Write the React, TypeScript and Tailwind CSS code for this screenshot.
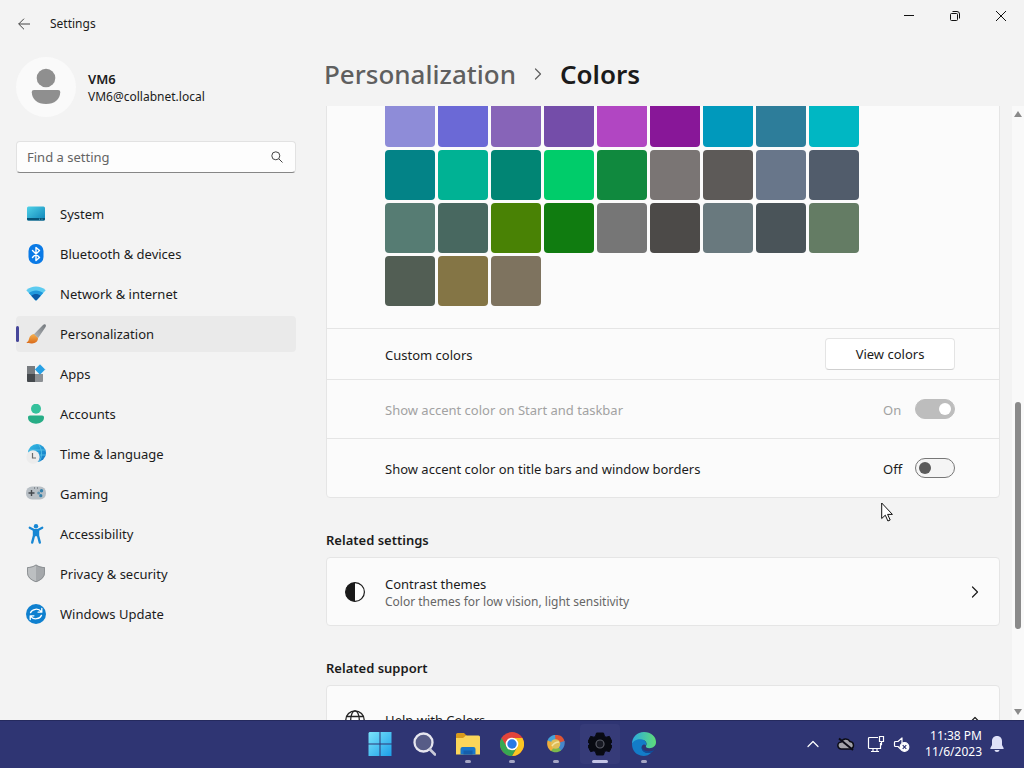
import { FC, ReactNode } from 'react';
import clsx from 'clsx';

interface NavItem {
  label: string;
  icon: ReactNode;
  active?: boolean;
}

interface TaskItem {
  label: string;
  icon: ReactNode;
  state?: 'running' | 'active';
}

const swatches = [
  '#8e8cd8', '#6b69d6', '#8764b8', '#744da9', '#b146c2', '#881798', '#0099bc', '#2d7d9a', '#00b7c3',
  '#038387', '#00b294', '#018574', '#00cc6a', '#10893e', '#7a7574', '#5d5a58', '#68768a', '#515c6b',
  '#567c73', '#486860', '#498205', '#107c10', '#767676', '#4c4a48', '#69797e', '#4a5459', '#647c64',
  '#525e54', '#847545', '#7e735f',
];

const navItems: NavItem[] = [
  {
    label: 'System',
    icon: (
      <svg viewBox="0 0 20 20" className="size-5">
        <defs>
          <linearGradient id="sys" x1="0" y1="0" x2="1" y2="1">
            <stop offset="0" stopColor="#4fd2e8" />
            <stop offset="1" stopColor="#0e83b8" />
          </linearGradient>
        </defs>
        <rect x="1" y="2.500" width="18" height="14" rx="1.500" fill="url(#sys)" />
        <path d="M1 14h18v1a1.500 1.500 0 0 1-1.500 1.500h-15A1.500 1.500 0 0 1 1 15z" fill="#075478" />
        <path d="M13 15.200h1m1.500 0h1" stroke="#7fd8ee" strokeWidth=".7" />
      </svg>
    ),
  },
  {
    label: 'Bluetooth & devices',
    icon: (
      <svg viewBox="0 0 20 20" className="size-5">
        <rect x="2.500" y="0" width="15" height="20" rx="7" fill="#0a7ae6" />
        <path d="M6.500 6.500l7 7L10 16.500v-13l3.500 3-7 7" fill="none" stroke="#fff" strokeWidth="1.400" strokeLinejoin="round" strokeLinecap="round" />
      </svg>
    ),
  },
  {
    label: 'Network & internet',
    icon: (
      <svg viewBox="0 0 20 20" className="size-5">
        <path d="M.3 6.200C5.500 1.300 14.500 1.300 19.700 6.200L10.800 16q-.8.800-1.600 0z" fill="#5ccbf0" />
        <path d="M2.800 9c4-3.500 10.400-3.500 14.400 0l-6.400 7q-.8.800-1.600 0z" fill="#1f98dd" />
        <path d="M5.300 11.700c2.700-2.300 6.700-2.300 9.400 0L10.800 16q-.8.800-1.600 0z" fill="#0b5ba8" />
      </svg>
    ),
  },
  {
    label: 'Personalization',
    active: true,
    icon: (
      <svg viewBox="0 0 20 20" className="size-5">
        <defs>
          <linearGradient id="brush" x1="0" y1="1" x2="1" y2="0">
            <stop offset="0" stopColor="#b4b8bb" />
            <stop offset="1" stopColor="#73787d" />
          </linearGradient>
          <linearGradient id="tip" x1="0" y1="0" x2="0" y2="1">
            <stop offset="0" stopColor="#f6b04e" />
            <stop offset="1" stopColor="#d96b1b" />
          </linearGradient>
        </defs>
        <path d="M19.400.5c.8.800.6 1.700 0 2.700l-7.400 11-4.300-3.700L17 1.100c.8-.9 1.700-1.200 2.400-.6z" fill="url(#brush)" />
        <path d="M7.800 10.100l4.200 3.800c.1 3.400-2.600 5.300-5.900 5.500-2 .1-4.300-.2-5.800-.9 2.100-.7 2.300-2.200 2.800-4 .6-2.300 2.500-4.100 4.700-4.400z" fill="url(#tip)" />
      </svg>
    ),
  },
  {
    label: 'Apps',
    icon: (
      <svg viewBox="0 0 20 20" className="size-5">
        <path d="M1 2h8v8H1z" fill="#777b7f" />
        <path d="M1 10h8v8H2a1 1 0 0 1-1-1z" fill="#45494d" />
        <path d="M9 10h8v7a1 1 0 0 1-1 1H9z" fill="#8c9094" />
        <path d="M14 .8l4.700 4.700-4.700 4.700-4.700-4.700z" fill="#27a0e4" stroke="#27a0e4" strokeLinejoin="round" />
      </svg>
    ),
  },
  {
    label: 'Accounts',
    icon: (
      <svg viewBox="0 0 20 20" className="size-5">
        <circle cx="10" cy="4.700" r="5" fill="#35c19c" />
        <path d="M4 11.500h12c1.300 0 2 .8 2 2 0 4-4 6.200-8 6.200s-8-2.200-8-6.200c0-1.200.7-2 2-2z" fill="#27ad86" />
      </svg>
    ),
  },
  {
    label: 'Time & language',
    icon: (
      <svg viewBox="0 0 20 20" className="size-5">
        <defs>
          <linearGradient id="globe" x1="0" y1="0" x2="1" y2="1">
            <stop offset="0" stopColor="#36bfe6" />
            <stop offset="1" stopColor="#1173c4" />
          </linearGradient>
        </defs>
        <circle cx="11" cy="9" r="9" fill="url(#globe)" />
        <path d="M3 6h16.400M12 0c4 4 5 12 1 18M19.500 11h-6" fill="none" stroke="#5cc6ea" strokeWidth=".8" />
        <circle cx="7" cy="13" r="6.700" fill="#ececec" />
        <path d="M6.500 9v5H10" fill="none" stroke="#6a6a6a" strokeWidth="1.200" />
      </svg>
    ),
  },
  {
    label: 'Gaming',
    icon: (
      <svg viewBox="0 0 20 20" className="size-5">
        <rect x="0" y="2.500" width="20" height="13" rx="6" fill="#b8bfc5" />
        <path d="M5.500 6v6M2.500 9h6" stroke="#43484d" strokeWidth="1.400" />
        <path d="M8 4h1m2 0h1" stroke="#555a60" strokeWidth="1" />
        <circle cx="15.500" cy="6.700" r="1.700" fill="#357fa8" />
        <circle cx="12.700" cy="9" r="1.500" fill="#5d93b0" />
        <circle cx="14.800" cy="11.700" r="1.600" fill="#357fa8" />
      </svg>
    ),
  },
  {
    label: 'Accessibility',
    icon: (
      <svg viewBox="0 0 20 20" className="size-5" fill="none" stroke="#1787d4" strokeLinecap="round" strokeLinejoin="round">
        <circle cx="10" cy="2.300" r="2.200" fill="#1787d4" stroke="none" />
        <path d="M3.700 3.700L8 6h4l4.300-2.300" strokeWidth="2.200" />
        <path d="M8 6.500h4v5l1.800 7M8 6.500v5l-1.800 7" strokeWidth="2.400" />
        <path d="M8.500 7h3v4.500h-3z" fill="#1787d4" strokeWidth="1.500" />
      </svg>
    ),
  },
  {
    label: 'Privacy & security',
    icon: (
      <svg viewBox="0 0 20 20" className="size-5">
        <path d="M10 .5c2.600 1.800 5.500 2.500 9 2.700v5c0 5-3.500 8-9 10z" fill="#a5a8ab" />
        <path d="M10 .5C7.400 2.300 4.500 3 1 3.200v5c0 5 3.500 8 9 10z" fill="#bcbfc1" />
        <path d="M10 1c2.600 1.800 5.200 2.400 8.500 2.600v4.600c0 4.800-3.300 7.600-8.500 9.500-5.200-1.900-8.500-4.700-8.500-9.500V3.600C4.800 3.400 7.400 2.800 10 1z" fill="none" stroke="#8d9194" />
      </svg>
    ),
  },
  {
    label: 'Windows Update',
    icon: (
      <svg viewBox="0 0 20 20" className="size-5">
        <circle cx="10" cy="10" r="10" fill="#0f80cf" />
        <path d="M4.500 8.700C6 4.800 12.500 3.800 15.200 7.700M15.800 4.500v3.700h-3.700M15.500 11.300C14 15.200 7.500 16.200 4.800 12.300M4.200 15.500v-3.700h3.700" fill="none" stroke="#fff" strokeWidth="1.300" strokeLinecap="round" strokeLinejoin="round" />
      </svg>
    ),
  },
];

const taskItems: TaskItem[] = [
  {
    label: 'Start',
    icon: (
      <svg viewBox="0 0 24 24" className="size-6">
        <defs>
          <linearGradient id="win" x1="0" y1="0" x2="1" y2="1">
            <stop offset="0" stopColor="#7be4fb" />
            <stop offset="1" stopColor="#1c9fe8" />
          </linearGradient>
        </defs>
        <path d="M1.500 0H11.500V11.500H.5V1zM12.500 0H23.500V11.500H12.500zM.5 12.500H11.500V24H.5zM12.500 12.500H23.500V24H12.500z" fill="url(#win)" />
      </svg>
    ),
  },
  {
    label: 'Search',
    icon: (
      <svg viewBox="0 0 24 24" className="size-6">
        <circle cx="11.500" cy="10.500" r="9" fill="#575c87" stroke="#e6e6ef" strokeWidth="2.300" />
        <path d="M18 17.500l5 5" stroke="#c9cad8" strokeWidth="2.600" strokeLinecap="round" />
      </svg>
    ),
  },
  {
    label: 'File Explorer',
    state: 'running',
    icon: (
      <svg viewBox="0 0 26 24" className="h-6 w-[26px]">
        <path d="M1 2.500A1.500 1.500 0 0 1 2.500 1H9l3 3-4 4H1z" fill="#d99a1c" />
        <path d="M1 6h7l3-2.500h12.500A1.500 1.500 0 0 1 25 5v17.500H1z" fill="#fbd65a" />
        <path d="M5.500 22.500V17a2 2 0 0 1 2-2h11a2 2 0 0 1 2 2v5.500z" fill="#1976c9" />
        <path d="M8.500 18.500h9V22.500h-9z" fill="#165fab" />
      </svg>
    ),
  },
  {
    label: 'Chrome',
    state: 'running',
    icon: (
      <svg viewBox="0 0 24 24" className="size-6">
        <circle cx="12" cy="12" r="12" fill="#e2443a" />
        <path d="M12 6h10.400A12 12 0 0 1 12 24l5.200-9z" fill="#fbc723" />
        <path d="M1.600 6L6.800 15A6 6 0 0 0 17.200 15L12 24A12 12 0 0 1 1.600 6z" fill="#36a852" />
        <circle cx="12" cy="12" r="6.300" fill="#fff" />
        <circle cx="12" cy="12" r="4.700" fill="#2a7ae4" />
      </svg>
    ),
  },
  {
    label: 'Color tool',
    state: 'running',
    icon: (
      <svg viewBox="0 0 20 20" className="size-5">
        <path d="M1.500 7C3 2 8 .2 12 1.400L10 10z" fill="#45a3d8" />
        <path d="M9 1.200c5-1 9 2 9.500 6.800L10 11z" fill="#df5535" />
        <path d="M18.500 7c.8 4-1 8-4.500 10l-5-7z" fill="#4687cb" />
        <path d="M15 16.500c-3 2.500-8 2.300-10.500 0L9 8z" fill="#7cba4b" />
        <path d="M5 17C1.500 14.500.5 10.500 1.500 6.500L11 10z" fill="#efae3c" />
        <circle cx="9.500" cy="10" r="4.800" fill="#dfbd58" />
        <path d="M6 12c2-3 4-4 7-4" stroke="#f4e3a0" strokeWidth="1.500" fill="none" />
      </svg>
    ),
  },
  {
    label: 'Settings',
    state: 'active',
    icon: (
      <svg viewBox="0 0 24 24" className="size-6">
        <path d="M8.500 1h7l1 3.300 1.500.9 3.400-.8 2.600 5.400-1.800 2.200 1.800 2.200-2.600 5.400-3.400-.8-1.500.9-1 3.300h-7l-1-3.300-1.500-.9-3.400.8L0 14.200 1.800 12 0 9.800l2.600-5.400 3.400.8 1.500-.9z" fill="#080a12" stroke="#080a12" strokeLinejoin="round" />
        <circle cx="12" cy="12" r="4" fill="#171923" stroke="#5a5c66" strokeWidth="1.200" />
      </svg>
    ),
  },
  {
    label: 'Edge',
    state: 'running',
    icon: (
      <svg viewBox="0 0 24 24" className="size-6">
        <defs>
          <linearGradient id="edge" x1="0" y1="0" x2="1" y2="0">
            <stop offset="0" stopColor="#2aa9e0" />
            <stop offset="1" stopColor="#5fdc78" />
          </linearGradient>
        </defs>
        <path d="M0 12C0 5 5 0 12 0s12 4.500 12 10c0 4-3 6.200-6.500 6.200-3 0-4-1-3.500-2.200 1.500-2.500 0-6-4-6C5 8 1 11 0 12z" fill="url(#edge)" />
        <path d="M0 12C1 9 5 7 9 7.300c4 .2 6 3.200 5 6.200-1-1.500-3-1.500-4 .5-1.500 3.500 2 8.500 9.500 6.500-4 4.500-10 4-13.500 2C2 20.500 0 16.500 0 12z" fill="#137cc8" />
        <path d="M10 14c-1.500 3.500 2 8.500 9.500 6.500 1-.5 2-1.300 2.800-2.500C16 21 9.500 19 10 14z" fill="#0c4f9e" />
      </svg>
    ),
  },
];

const Chevron: FC<{ className?: string }> = ({ className }) => (
  <svg viewBox="0 0 12 12" className={clsx('size-3', className)}>
    <path d="M3.500 1l5 5-5 5" fill="none" stroke="currentColor" strokeWidth="1.200" strokeLinecap="round" strokeLinejoin="round" />
  </svg>
);

const Toggle: FC<{ id: string; label: string; checked?: boolean; disabled?: boolean }> = ({ id, label, checked, disabled }) => (
  <div className={clsx('flex h-[59px] items-center border-t border-[#e5e5e5] pr-11 pl-[58px]', disabled && 'text-[#a2a2a2]')}>
    <label htmlFor={id} className="flex-1 pt-[2px]">{label}</label>
    <span className="w-8 pt-[2px]" aria-hidden="true">{checked ? 'On' : 'Off'}</span>
    <input
      id={id}
      type="checkbox"
      role="switch"
      defaultChecked={checked}
      disabled={disabled}
      className="flex h-5 w-10 appearance-none items-center rounded-full border border-[#777] bg-[#f5f5f5] px-[3px] before:size-3 before:rounded-full before:bg-[#5c5c5c] checked:justify-end checked:border-[#bdbdbd] checked:bg-[#bdbdbd] checked:before:bg-white"
    />
  </div>
);

const TitleBar: FC = () => (
  <header className="flex h-12 shrink-0 items-start justify-between">
    <div className="flex h-12 items-center gap-5 pl-[18px]">
      <button aria-label="Back">
        <svg viewBox="0 0 12 12" className="size-3">
          <path d="M12 6H.7M6 .7L.7 6 6 11.300" fill="none" stroke="#444" strokeWidth="1" />
        </svg>
      </button>
      <span className="text-xs">Settings</span>
    </div>
    <div className="flex h-8">
      <button aria-label="Minimize" className="flex w-[46px] items-center justify-center">
        <svg viewBox="0 0 12 12" className="size-3">
          <path d="M1 5.500h10" stroke="#111" />
        </svg>
      </button>
      <button aria-label="Restore" className="flex w-[46px] items-center justify-center">
        <svg viewBox="0 0 12 12" className="size-3" fill="none" stroke="#111">
          <rect x="1.500" y="3.500" width="7" height="7" rx="1" />
          <path d="M3.500 1.500H8A2.500 2.500 0 0 1 10.500 4v4.500" />
        </svg>
      </button>
      <button aria-label="Close" className="flex w-[46px] items-center justify-center">
        <svg viewBox="0 0 12 12" className="size-3">
          <path d="M1 1l10 10M11 1L1 11" stroke="#111" />
        </svg>
      </button>
    </div>
  </header>
);

const Sidebar: FC = () => (
  <aside className="w-[312px] shrink-0 px-4 pt-[9px]">
    <div className="flex items-center gap-3">
      <svg viewBox="0 0 60 60" className="size-[60px]">
        <circle cx="30" cy="30" r="30" fill="#fafafa" />
        <circle cx="30" cy="21" r="9.300" fill="#8f8f8f" />
        <path d="M18 33h24c1.500 0 2.200.8 2.200 2.300C44.200 42.500 38.500 47 30 47s-14.200-4.500-14.200-11.700c0-1.500.7-2.300 2.200-2.300z" fill="#8f8f8f" />
      </svg>
      <div className="pt-[2px]">
        <p className="leading-[18px] font-semibold">VM6</p>
        <p className="text-xs leading-[18px]">VM6@collabnet.local</p>
      </div>
    </div>

    <div className="mt-6 flex h-8 items-center rounded border border-[#e2e2e2] border-b-[#868686] bg-[#fdfdfd] pr-3 pl-[10px]">
      <input type="search" aria-label="Find a setting" placeholder="Find a setting" className="min-w-0 flex-1 outline-none placeholder:text-[#646464]" />
      <svg viewBox="0 0 12 12" className="size-3" fill="none" stroke="#444">
        <circle cx="4.800" cy="4.800" r="4" />
        <path d="M7.800 7.800l3.700 3.700" />
      </svg>
    </div>

    <nav className="mt-[23px] flex flex-col gap-1">
      {navItems.map((item) => (
        <a
          key={item.label}
          href="#"
          aria-current={item.active ? 'page' : undefined}
          className={clsx('relative flex h-9 items-center gap-[14px] rounded pl-[10px]', item.active && 'bg-[#eaeaea]')}
        >
          {item.active && <span className="absolute left-0 h-4 w-[3px] rounded-full bg-[#46469a]" />}
          {item.icon}
          <span>{item.label}</span>
        </a>
      ))}
    </nav>
  </aside>
);

const ColorsPage: FC = () => (
  <main className="flex min-w-0 flex-1 flex-col pl-[14px]">
    <h1 className="-ml-[2px] flex h-[58px] shrink-0 items-center gap-4 pb-[6px] text-[26px]">
      <a href="#" className="font-medium text-[#5f5f5f]">Personalization</a>
      <Chevron className="text-[#5f5f5f]" />
      <span className="font-semibold">Colors</span>
    </h1>

    <div className="flex min-h-0 flex-1 gap-3">
      <div className="min-w-0 flex-1 overflow-hidden">
        <section className="-mt-[10px] rounded-b border border-[#e5e5e5] bg-[#fbfbfb]">
          <div className="grid grid-cols-[repeat(9,50px)] gap-[3px] pb-[22px] pl-[58px]">
            {swatches.map((color) => (
              <button key={color} aria-label={color} className="h-[50px] rounded" style={{ backgroundColor: color }} />
            ))}
          </div>
          <div className="flex h-[51px] items-center justify-between border-t border-[#e5e5e5] pr-11 pl-[58px]">
            <span className="pt-[2px]">Custom colors</span>
            <button className="h-8 w-[130px] rounded border border-[#e4e4e4] border-b-[#cfcfcf] bg-white">View colors</button>
          </div>
          <Toggle id="taskbar-accent" label="Show accent color on Start and taskbar" checked disabled />
          <Toggle id="title-accent" label="Show accent color on title bars and window borders" />
        </section>

        <h2 className="mt-8 mb-[7px] font-semibold">Related settings</h2>
        <a href="#" className="flex h-[69px] items-center rounded border border-[#e5e5e5] bg-[#fbfbfb] px-[18px]">
          <svg viewBox="0 0 20 20" className="size-5">
            <circle cx="10" cy="10" r="9.400" fill="#fff" stroke="#1a1a1a" strokeWidth="1.200" />
            <path d="M10 .6a9.400 9.400 0 0 0 0 18.800z" fill="#1a1a1a" />
          </svg>
          <span className="flex flex-1 flex-col pt-[2px] pl-5">
            <span className="leading-[18px]">Contrast themes</span>
            <span className="text-xs leading-[18px] text-[#666]">Color themes for low vision, light sensitivity</span>
          </span>
          <Chevron />
        </a>

        <h2 className="mt-8 mb-[7px] font-semibold">Related support</h2>
        <button className="flex h-[69px] w-full items-center rounded border border-[#e5e5e5] bg-[#fbfbfb] px-[18px] text-left">
          <svg viewBox="0 0 20 20" className="size-5" fill="none" stroke="#222" strokeWidth="1.300">
            <circle cx="10" cy="10" r="9.200" />
            <ellipse cx="10" cy="10" rx="4.300" ry="9.200" />
            <path d="M1.800 6.500h16.400M1.800 13.500h16.400" />
          </svg>
          <span className="flex-1 pl-5">Help with Colors</span>
          <Chevron className="-rotate-90" />
        </button>
      </div>

      <div className="flex w-3 shrink-0 flex-col items-center bg-[#f9f9f9] py-[5px]" aria-hidden="true">
        <svg viewBox="0 0 8 6" className="h-[6px] w-2">
          <path d="M4 0l4 6H0z" fill="#8a8a8a" />
        </svg>
        <div className="grow-[285]" />
        <div className="w-[6px] grow-[227] rounded-full bg-[#8a8a8a]" />
        <div className="grow-[80]" />
        <svg viewBox="0 0 8 6" className="h-[6px] w-2">
          <path d="M4 6l4-6H0z" fill="#8a8a8a" />
        </svg>
      </div>
    </div>
  </main>
);

const Taskbar: FC = () => (
  <footer className="grid h-12 shrink-0 grid-cols-[1fr_auto_1fr] items-center bg-[#2f3573] text-white inset-shadow-[0_1px_0_#252a5e]">
    <div />
    <div className="flex">
      {taskItems.map((item) => (
        <button
          key={item.label}
          aria-label={item.label}
          className={clsx('relative mx-[2px] flex h-10 w-10 items-center justify-center rounded', item.state === 'active' && 'bg-[#363b78]')}
        >
          {item.icon}
          {item.state && (
            <span className={clsx('absolute bottom-px h-[3px] rounded-full', item.state === 'active' ? 'w-4 bg-[#c3c4e6]' : 'w-[6px] bg-[#a5a6c4]')} />
          )}
        </button>
      ))}
    </div>
    <div className="flex items-center justify-end pr-5">
      <button aria-label="Show hidden icons" className="mr-[18px]">
        <Chevron className="-rotate-90" />
      </button>
      <svg viewBox="0 0 18 16" className="mr-3 h-4 w-[18px]">
        <path d="M4.500 13a3.500 3.500 0 0 1-.3-7A5 5 0 0 1 13 5.500 3.800 3.800 0 0 1 13.500 13z" fill="#a2a2a8" stroke="#0b0c16" strokeWidth="1.500" />
        <path d="M2 2.500l14 11.500" stroke="#0b0c16" strokeWidth="2" />
      </svg>
      <svg viewBox="0 0 18 18" className="mr-2 size-[18px]" fill="none" stroke="#fff" strokeWidth="1.200">
        <path d="M11 2.500H2.500a1 1 0 0 0-1 1v9a1 1 0 0 0 1 1h11V8M6 13.500v3M10 13.500v3M4 16.500h8M12.500 1.500h4v5h-4zM14.500 6.500v3l-1 1" />
      </svg>
      <svg viewBox="0 0 18 18" className="mr-[14px] size-[18px]" fill="none" stroke="#fff" strokeWidth="1.200">
        <path d="M7.500 14L5 11.500H2.500a1 1 0 0 1-1-1v-3a1 1 0 0 1 1-1H5L9 3v5" strokeLinejoin="round" />
        <circle cx="11.500" cy="12" r="4.300" fill="#fff" />
        <path d="M9.700 10.200l3.600 3.600m0-3.600l-3.600 3.600" stroke="#2f3573" />
      </svg>
      <time dateTime="2023-11-06T23:38" className="text-right text-xs leading-4">
        11:38 PM
        <br />
        11/6/2023
      </time>
      <svg viewBox="0 0 14 16" className="ml-2 h-4 w-[14px]" fill="#dfe1f8">
        <path d="M7 0c3.200 0 5 2.300 5 5v4l1.600 3c.2.500 0 1-.6 1H1c-.6 0-.8-.5-.6-1L2 9V5c0-2.700 1.800-5 5-5zM4.500 14h5c-.2 1.200-1.200 2-2.500 2s-2.300-.8-2.500-2z" />
      </svg>
    </div>
  </footer>
);

const App: FC = () => (
  <div className="relative flex h-screen flex-col overflow-hidden bg-[#f3f3f3] font-['Noto_Sans','Open_Sans',sans-serif] text-[13px] leading-5 text-[#1b1b1b]">
    <TitleBar />
    <div className="flex min-h-0 flex-1">
      <Sidebar />
      <ColorsPage />
    </div>
    <Taskbar />

    <svg viewBox="0 0 12 20" className="absolute top-[502px] left-[881px] h-5 w-3">
      <path d="M.7 1v15.500l3.600-3.300 2.600 5.800 2.300-1-2.600-5.600h4.800z" fill="#fff" stroke="#111" />
    </svg>
  </div>
);

export default App;
